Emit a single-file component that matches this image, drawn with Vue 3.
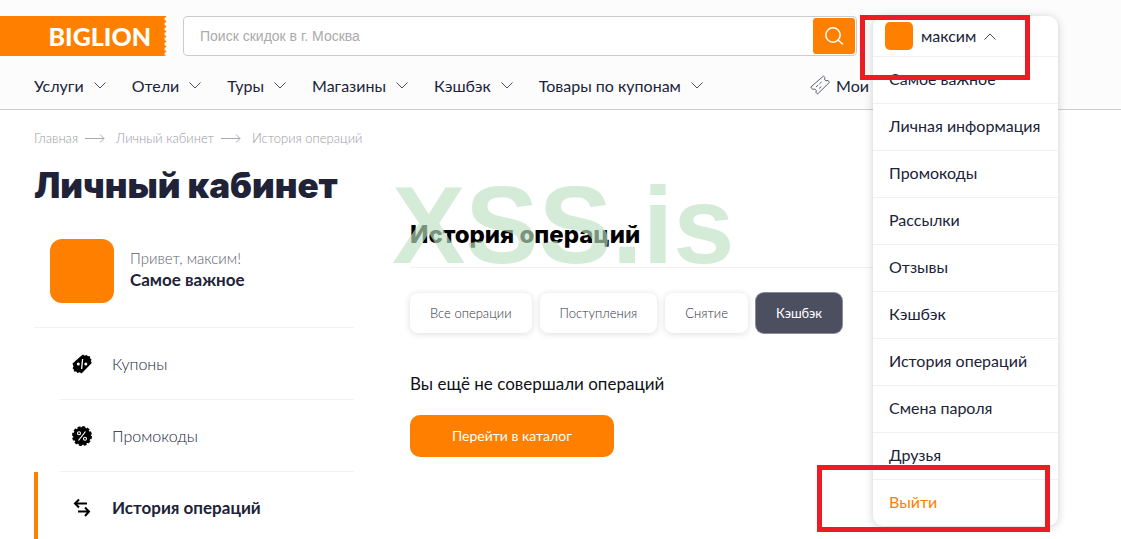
<script setup>
import { ref } from 'vue'

const query = ref('')
const nav = ['Услуги', 'Отели', 'Туры', 'Магазины', 'Кэшбэк', 'Товары по купонам']
const accountLinks = [
  'Самое важное',
  'Личная информация',
  'Промокоды',
  'Рассылки',
  'Отзывы',
  'Кэшбэк',
  'История операций',
  'Смена пароля',
  'Друзья',
  'Выйти',
]
const filters = ['Все операции', 'Поступления', 'Снятие', 'Кэшбэк']
const active = ref('Кэшбэк')
</script>

<template>
  <div class="page">
    <header class="header">
      <div class="top">
        <a class="logo" href="#" aria-label="BIGLION">
          <span>BIGLION</span>
          <svg class="edge" width="3" height="40" viewBox="0 0 3 40" aria-hidden="true">
            <path d="M2 0v1a2 2 0 0 0 0 4v1a2 2 0 0 0 0 4v1a2 2 0 0 0 0 4v1a2 2 0 0 0 0 4v1a2 2 0 0 0 0 4v1a2 2 0 0 0 0 4v1a2 2 0 0 0 0 4v1a2 2 0 0 0 0 4H0V0z" fill="#ff8000" stroke="#ff8000" stroke-width=".5" />
          </svg>
        </a>
        <form class="search" @submit.prevent>
          <input v-model="query" type="text" aria-label="Поиск скидок" placeholder="Поиск скидок в г. Москва" />
          <button type="submit" aria-label="Найти">
            <svg width="20" height="20" viewBox="0 0 20 20" fill="none" stroke="#fff" stroke-width="1.500">
              <circle cx="9" cy="9" r="7.200" />
              <path d="M14 14l4.500 4" stroke-linecap="round" />
            </svg>
          </button>
        </form>
        <div class="account">
          <div class="panel">
            <button class="user" type="button" aria-expanded="true">
              <span class="face"></span>
              <span class="name">максим</span>
              <svg width="12" height="7" viewBox="0 0 12 7" fill="none" stroke="#4a4d60"><path d="M.5 6.500 6 1l5.500 5.500" /></svg>
            </button>
            <a v-for="link in accountLinks" :key="link" href="#" :class="{ exit: link === 'Выйти' }">{{ link }}</a>
          </div>
          <div class="mark mark-user"></div>
          <div class="mark mark-exit"></div>
        </div>
      </div>
      <nav class="nav">
        <a v-for="item in nav" :key="item" href="#">
          {{ item }}
          <svg width="12" height="7" viewBox="0 0 12 7" fill="none" stroke="#4a4d60"><path d="M.5.500 6 6 11.500.500" /></svg>
        </a>
        <a class="mine" href="#">
          <svg width="20" height="20" viewBox="0 0 20 20" fill="none" stroke="#5c5f6e">
            <path d="M.8 12 13.500 1l1.500 1.500-.5 2 1.500 1.200 2-.3L19.300 7.500 7.500 19 6 17.500l.3-2.200-1.500-1.200-2.200.2z" stroke-linejoin="round" />
            <path d="M6 12 11.500 7M9 13.500l3.500-3" stroke-dasharray="3 1.500" />
          </svg>
          Мои
        </a>
      </nav>
    </header>

    <main class="main">
      <nav class="crumbs" aria-label="Навигация">
        <template v-for="(c, i) in ['Главная', 'Личный кабинет', 'История операций']" :key="c">
          <svg v-if="i" width="20" height="9" viewBox="0 0 20 9" fill="none" stroke="#aaaab4"><path d="M0 4.500h19M15 .500l4 4-4 4" /></svg>
          <a href="#">{{ c }}</a>
        </template>
      </nav>
      <h1>Личный кабинет</h1>
      <div class="columns">
        <aside>
          <div class="profile">
            <span class="avatar"></span>
            <div>
              <p>Привет, максим!</p>
              <strong>Самое важное</strong>
            </div>
          </div>
          <a class="side" href="#">
            <span>
              <svg width="20" height="20" viewBox="0 0 20 20">
                <path d="M.5 9.500 9 2 11 .400 12.500 1.800 14.500 1 16 2.300 18 2.200 18.200 4.500 19.600 5.500 18.800 7 19.800 9 11 18 9.500 19.600 7.800 18.300 5.500 19 4.200 17.500 2 17.600 1.800 15.500.600 14.300 1.500 12.500z" />
                <path d="M10.600 5 9.600 15" stroke="#fff" stroke-width="1.300" />
                <circle cx="6.300" cy="10" r="1.500" fill="#fff" /><circle cx="13.800" cy="10" r="1.500" fill="#fff" />
              </svg>
              Купоны
            </span>
          </a>
          <a class="side" href="#">
            <span>
              <svg width="20" height="20" viewBox="0 0 20 20">
                <circle cx="10" cy="10" r="9" />
                <circle cx="10" cy="10" r="9.200" fill="none" stroke="#000" stroke-width="1.600" stroke-dasharray="3 1.817" />
                <path d="M13.500 5.500 6.500 14.500" stroke="#fff" stroke-width="1.200" />
                <circle cx="7" cy="7.200" r="1.500" fill="none" stroke="#fff" stroke-width="1.100" /><circle cx="13" cy="12.800" r="1.500" fill="none" stroke="#fff" stroke-width="1.100" />
              </svg>
              Промокоды
            </span>
          </a>
          <a class="side current" href="#">
            <span>
              <svg width="20" height="20" viewBox="0 0 20 20" fill="none" stroke="#000" stroke-width="2">
                <path d="M7 1.500 3 5.500l4 4M3 5.500h12M13 9.500l4 4-4 4.500M17 13.500H6" />
              </svg>
              История операций
            </span>
          </a>
        </aside>
        <section>
          <h2>История операций</h2>
          <div class="filters">
            <button v-for="f in filters" :key="f" type="button" :class="{ on: f === active }" @click="active = f">{{ f }}</button>
          </div>
          <p class="empty">Вы ещё не совершали операций</p>
          <a class="catalog" href="#">Перейти в каталог</a>
          <div class="watermark">XSS.is</div>
        </section>
      </div>
    </main>
  </div>
</template>

<style>
body {
  background: #fff;
}
</style>

<style scoped>
.page {
  height: 100vh;
  overflow: hidden;
  font-family: Lato, "Open Sans", sans-serif;
  font-size: 16px;
  color: #202338;
}
.page *,
.page {
  box-sizing: border-box;
}
a {
  color: inherit;
  text-decoration: none;
}
button,
input {
  font: inherit;
  color: inherit;
  border: 0;
  margin: 0;
}
p,
h1,
h2 {
  margin: 0;
}
svg {
  flex: none;
}
.header {
  background: #fcfcfc;
  border-bottom: 1px solid #ccc;
  padding-top: 16px;
}
.top {
  display: flex;
  gap: 16px;
  height: 40px;
  padding-right: 63px;
}
.logo {
  width: 167px;
  display: flex;
  align-items: center;
  color: #fff;
  font-size: 25px;
  font-weight: 900;
}
.logo span {
  flex: 1;
  line-height: 40px;
  text-align: right;
  padding-right: 13px;
  background: #ff8000;
}
.search {
  flex: 1;
  min-width: 0;
  display: flex;
  padding: 1px;
  border: 1px solid #ccc;
  border-radius: 4px;
  background: #fff;
}
.search input {
  flex: 1;
  min-width: 0;
  padding: 0 15px;
  background: none;
  font: 14px "Liberation Sans", Arial, sans-serif;
}
.search input::placeholder {
  color: #aaa;
}
.search button {
  width: 42px;
  padding: 0;
  display: grid;
  place-items: center;
  border-radius: 3px;
  background: #ff8000;
}
.account {
  position: relative;
  width: 185px;
}
.panel {
  position: absolute;
  z-index: 2;
  inset: 0 0 auto;
  border-radius: 10px;
  background: #fff;
  box-shadow: 0 1px 8px rgba(30, 35, 60, 0.22);
}
.user {
  width: 100%;
  height: 40px;
  display: flex;
  align-items: center;
  gap: 8px;
  padding: 0 12px;
  background: none;
}
.name {
  padding-bottom: 2px;
}
.face {
  width: 28px;
  height: 28px;
  border-radius: 5px;
  background: #ff8000;
}
.panel a {
  display: block;
  height: 47px;
  line-height: 44px;
  padding-left: 16px;
  border-top: 1px solid #f0f0f2;
  white-space: nowrap;
}
.panel .exit {
  color: #ff8000;
}
.mark {
  position: absolute;
  z-index: 3;
  border: 5px solid #ed1c24;
  pointer-events: none;
}
.mark-user {
  left: -13px;
  top: -1px;
  width: 170px;
  height: 65px;
}
.mark-exit {
  left: -56px;
  top: 449px;
  width: 233px;
  height: 67px;
}
.nav {
  display: flex;
  align-items: center;
  gap: 26px;
  height: 53px;
  padding: 5px 252px 0 34px;
  white-space: nowrap;
}
.nav a {
  display: flex;
  align-items: center;
  gap: 10px;
}
.nav .mine {
  margin-left: auto;
  gap: 6px;
}
.main {
  padding: 18px 63px 0 34px;
}
.crumbs {
  display: flex;
  align-items: center;
  gap: 11px;
  height: 20px;
  font-size: 13px;
  font-weight: 300;
  color: #9a9aa2;
}
.crumbs svg {
  margin-left: -4px;
}
h1 {
  margin-top: 15px;
  font-family: Inter, sans-serif;
  font-size: 35px;
  line-height: 44px;
  font-weight: 900;
}
.columns {
  display: grid;
  grid-template-columns: 320px minmax(0, 1fr);
  gap: 56px;
}
.profile {
  display: flex;
  align-items: center;
  gap: 16px;
  height: 121px;
  padding: 8px 0 0 16px;
  border-bottom: 1px solid #f0f0f2;
}
.avatar {
  width: 64px;
  height: 64px;
  border-radius: 12px;
  background: #ff8000;
}
.profile div {
  padding-bottom: 4px;
}
.profile p {
  font-size: 15px;
  font-weight: 300;
  line-height: 22px;
  color: #60626e;
}
.profile strong {
  font-size: 17px;
  line-height: 22px;
}
.side {
  display: block;
  padding-left: 26px;
  font-weight: 300;
}
.side span {
  display: flex;
  align-items: center;
  gap: 20px;
  height: 72px;
  padding-left: 12px;
  border-bottom: 1px solid #f0f0f2;
}
.current {
  padding-left: 22px;
  border-left: 4px solid #ff8000;
  font-size: 17px;
  font-weight: 700;
}
section {
  position: relative;
}
h2 {
  height: 61px;
  padding-top: 12px;
  border-bottom: 1px solid #f0f0f2;
  color: #000;
  font-family: Inter, sans-serif;
  font-size: 24px;
  line-height: 32px;
  font-weight: 800;
}
.filters {
  display: flex;
  gap: 8px;
  margin-top: 25px;
}
.filters button {
  height: 40px;
  padding: 0 20px;
  border-radius: 8px;
  background: #fff;
  box-shadow: 0 1px 6px rgba(30, 35, 60, 0.16);
  color: #30333f;
  font-size: 13px;
  font-weight: 300;
}
.filters .on {
  background: #4c4f60;
  box-shadow: 0 0 0 1px #8a8c98;
  color: #fff;
  font-weight: 400;
}
.empty {
  margin-top: 39px;
  font-size: 17px;
  line-height: 24px;
  color: #101018;
}
.catalog {
  display: inline-block;
  margin-top: 19px;
  padding: 0 42px;
  border-radius: 10px;
  background: #ff8000;
  color: #fff;
  font-size: 14px;
  line-height: 42px;
}
.watermark {
  position: absolute;
  left: -18px;
  top: -46px;
  font: 700 110px/128px "Liberation Sans", Arial, sans-serif;
  color: rgba(187, 224, 193, 0.65);
  pointer-events: none;
}
</style>
